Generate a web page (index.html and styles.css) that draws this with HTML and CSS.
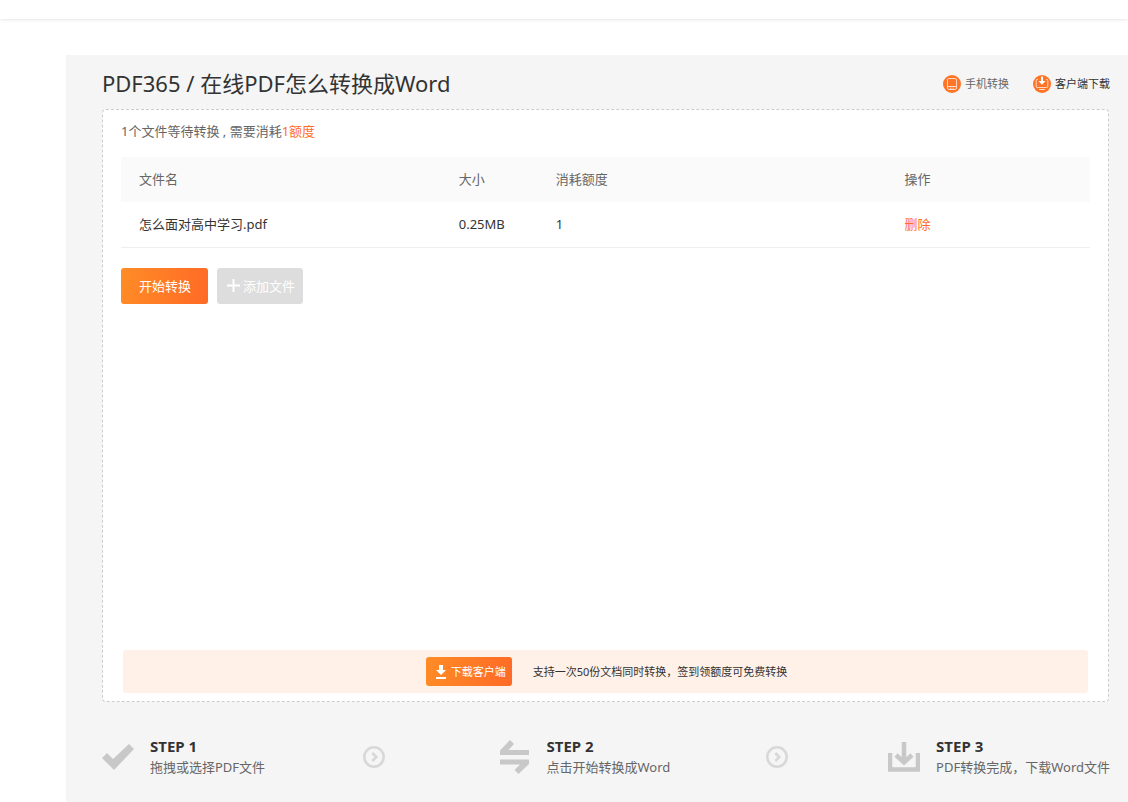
FILE: index.html
```html
<!DOCTYPE html>
<html lang="zh-CN">
<head>
<meta charset="utf-8">
<title>PDF365 / 在线PDF怎么转换成Word</title>
<meta name="viewport" content="width=device-width, initial-scale=1">
<link rel="stylesheet" href="styles.css">
</head>
<body>
<div class="topbar"></div>
<main class="page">
  <header class="heading">
    <h1 class="title">PDF365 / 在线PDF怎么转换成Word</h1>
    <nav class="links">
      <a class="link" href="#">
        <svg class="link-icon" viewBox="0 0 18 18" aria-hidden="true"><circle cx="9" cy="9" r="9" fill="#ff7426"/><rect x="4.5" y="3.5" width="9" height="11" rx="1.5" fill="none" stroke="#ffd9c2"/><path d="M5 11.5h8" stroke="#ffd9c2"/><path d="M7 13.200h1.400M9.600 13.200H11" stroke="#ffd9c2"/></svg>
        手机转换
      </a>
      <a class="link link-dark" href="#">
        <svg class="link-icon" viewBox="0 0 18 18" aria-hidden="true"><circle cx="9" cy="9" r="9" fill="#ff7426"/><path d="M5 4.500H4.200a1 1 0 0 0-1 1v6a1 1 0 0 0 1 1h9.600a1 1 0 0 0 1-1v-6a1 1 0 0 0-1-1H13M6 14.500h6" fill="none" stroke="#ffd9c2"/><path d="M8 1.500h2V6h2.500L9 9.800 5.500 6H8z" fill="#fff"/></svg>
        客户端下载
      </a>
    </nav>
  </header>

  <section class="panel">
    <p class="summary">1个文件等待转换 , 需要消耗<span class="accent">1额度</span></p>
    <table class="files">
      <thead>
        <tr><th class="col-name">文件名</th><th class="col-size">大小</th><th class="col-cost">消耗额度</th><th>操作</th></tr>
      </thead>
      <tbody>
        <tr><td>怎么面对高中学习.pdf</td><td>0.25MB</td><td>1</td><td><a class="accent" href="#">删除</a></td></tr>
      </tbody>
    </table>
    <div class="actions">
      <button class="btn btn-primary" type="button">开始转换</button>
      <button class="btn btn-muted" type="button">
        <svg class="plus" viewBox="0 0 12 12" aria-hidden="true"><path d="M6 0v12M0 6h12" stroke="#fff" stroke-width="1.800"/></svg>
        添加文件
      </button>
    </div>
    <aside class="promo">
      <button class="btn btn-primary btn-small" type="button">
        <svg class="down" viewBox="0 0 10 14" aria-hidden="true"><path d="M3 0h4v5h3l-5 5-5-5h3zM0 12h10v2H0z" fill="#fff"/></svg>
        下载客户端
      </button>
      <span>支持一次50份文档同时转换，签到领额度可免费转换</span>
    </aside>
  </section>

  <section class="steps">
    <div class="step">
      <svg class="step-icon" viewBox="0 0 32 34" aria-hidden="true"><path d="M0 18l5-5 6 6L27 4l5 5-20 21z" fill="#c8c8c8"/></svg>
      <div class="step-text"><h2 class="step-title">STEP 1</h2><p class="step-desc">拖拽或选择PDF文件</p></div>
      <svg class="arrow" viewBox="0 0 22 22" aria-hidden="true"><circle cx="11" cy="11" r="9.700" fill="none" stroke="#d8d8d8" stroke-width="2.600"/><path d="M9.300 7l4 4-4 4" fill="none" stroke="#d8d8d8" stroke-width="2.600"/></svg>
    </div>
    <div class="step step-middle">
      <svg class="step-icon" viewBox="0 0 32 34" aria-hidden="true"><path d="M1 15V10.500L11 0l4 4-5.500 6H30v5zM1 19.500h29V24L19.500 34l-4-4 5.500-5.500H1z" fill="#c8c8c8"/></svg>
      <div class="step-text"><h2 class="step-title">STEP 2</h2><p class="step-desc">点击开始转换成Word</p></div>
      <svg class="arrow" viewBox="0 0 22 22" aria-hidden="true"><circle cx="11" cy="11" r="9.700" fill="none" stroke="#d8d8d8" stroke-width="2.600"/><path d="M9.300 7l4 4-4 4" fill="none" stroke="#d8d8d8" stroke-width="2.600"/></svg>
    </div>
    <div class="step step-last">
      <svg class="step-icon" viewBox="0 0 32 34" aria-hidden="true"><path d="M2 13v16.500h28V13M16 2v20M8 15l8 7.500 8-7.500" fill="none" stroke="#c8c8c8" stroke-width="4.500"/></svg>
      <div class="step-text"><h2 class="step-title">STEP 3</h2><p class="step-desc">PDF转换完成，下载Word文件</p></div>
    </div>
  </section>
</main>
</body>
</html>
```

FILE: styles.css
```css
* { box-sizing: border-box; }

body {
  margin: 0;
  background: #fff;
  color: #333;
  font: 13px/20px "Noto Sans", "Noto Sans CJK SC", sans-serif;
}

h1, h2, p { margin: 0; font-weight: 400; }
a { color: inherit; text-decoration: none; }
svg { flex: none; }

.topbar {
  height: 19px;
  margin-bottom: 36px;
  box-shadow: 0 1px 3px rgba(0, 0, 0, 0.1);
}

.page {
  min-height: calc(100vh - 55px);
  margin-left: 66px;
  padding: 0 18px 23px 36px;
  background: #f5f5f5;
}

.heading {
  display: flex;
  align-items: center;
  justify-content: space-between;
  height: 54px;
  padding-top: 4px;
}

.title { padding-bottom: 2px; font-size: 22px; line-height: 32px; }

.links { display: flex; gap: 24px; }

.link {
  display: flex;
  align-items: center;
  gap: 4px;
  color: #666;
  font-size: 11px;
}

.link-dark { color: #333; }
.link-icon { width: 18px; height: 18px; }

.panel {
  display: flex;
  flex-direction: column;
  min-height: 593px;
  margin-right: 1px;
  padding: 11px 18px 8px;
  border: 1px dashed #ccc;
  border-radius: 4px;
  background: #fff;
}

.summary { color: #666; }
.accent { color: #ff6d26; }

.files {
  width: 100%;
  margin-top: 16px;
  border-collapse: collapse;
  table-layout: fixed;
}

.files th, .files td {
  height: 45px;
  padding: 0 18px;
  text-align: left;
}

.files th { padding-bottom: 2px; background: #fafafa; color: #666; font-weight: 400; }
.files td { border-bottom: 1px solid #eee; }
.col-name { width: 33%; }
.col-size { width: 10%; }
.col-cost { width: 36%; }

.actions { display: flex; gap: 9px; margin-top: 20px; }

.btn {
  display: flex;
  align-items: center;
  justify-content: center;
  gap: 3px;
  height: 36px;
  padding: 0 17px 0 18px;
  border: 0;
  border-radius: 3px;
  color: #fff;
  font: inherit;
}

.btn-primary { background: linear-gradient(100deg, #ff8c26, #ff6a26); }
.btn-muted { padding: 0 8px 0 10px; background: #ddd; }
.btn-small { height: 29px; padding: 0 6px 0 10px; gap: 5px; font-size: 11px; }
.plus { width: 13px; height: 13px; }
.down { width: 10px; height: 14px; }

.promo {
  display: flex;
  align-items: center;
  justify-content: center;
  gap: 21px;
  height: 43px;
  margin: auto 2px 0;
  padding-left: 2px;
  border-radius: 3px;
  background: #fff1e8;
  font-size: 11px;
}

.steps {
  display: grid;
  grid-template-columns: 397fr 390fr auto;
  margin-top: 33px;
}

.step { display: flex; align-items: center; padding-right: 114px; }
.step-middle { padding-right: 100px; }
.step-last { padding-right: 0; }
.step-icon { width: 32px; height: 34px; margin-right: 16px; }
.step-title { color: #333; font-size: 15px; font-weight: 700; line-height: 22px; }
.step-desc { color: #666; line-height: 21px; white-space: nowrap; }
.arrow { width: 22px; height: 22px; margin-left: auto; }
```
